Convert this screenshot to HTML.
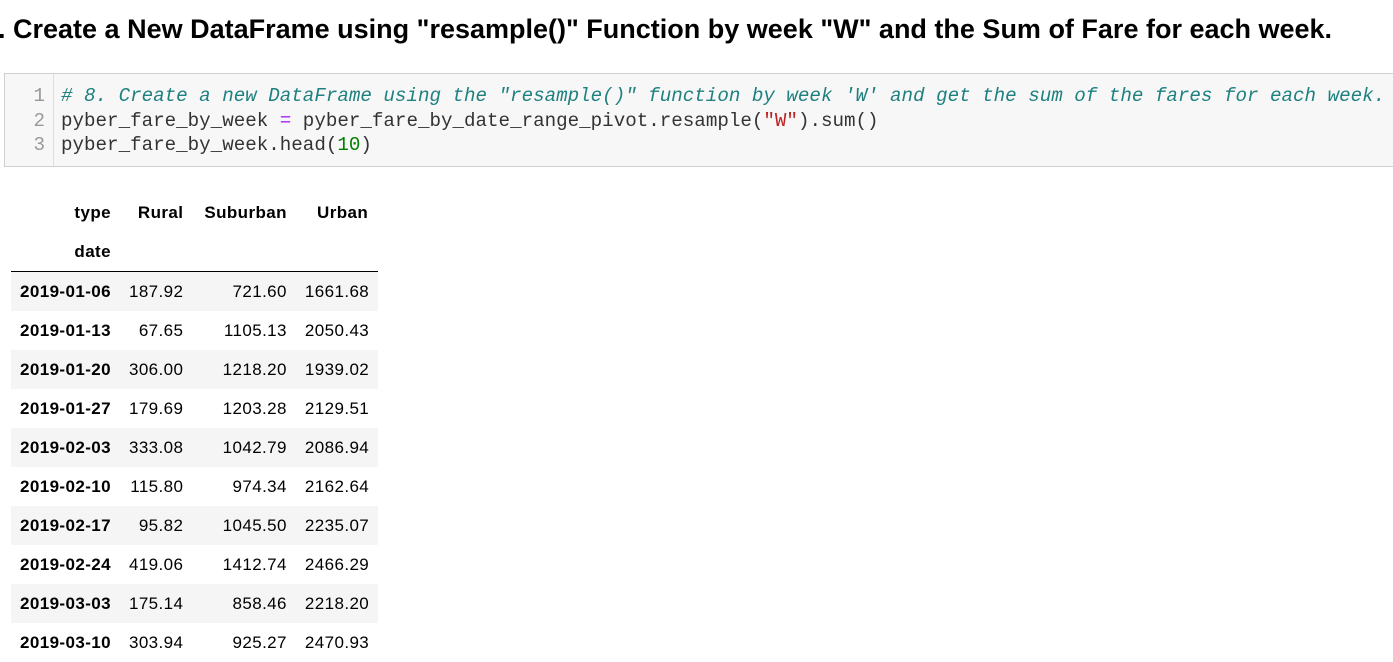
<!DOCTYPE html>
<html><head><style>
body{margin:0;background:#fff;width:1393px;height:659px;overflow:hidden;font-family:"Liberation Sans",Arial,sans-serif;}
h2{position:absolute;left:-2px;top:14px;margin:0;font-size:27px;font-weight:bold;color:#000;white-space:nowrap}
.cell{position:absolute;left:4px;top:73px;width:1400px;height:92px;background:#f7f7f7;border:1px solid #cfcfcf;}
.gut{position:absolute;left:0;top:0;width:48px;height:92px;border-right:1px solid #ddd;}
.code{position:absolute;top:10px;font-family:"Liberation Mono",monospace;font-size:19.2px;line-height:24.5px;white-space:pre;color:#333}
.ln{left:0;width:40px;text-align:right;color:#999}
.src{left:56px}
.c{color:#1f8080;font-style:italic}
.o{color:#aa22ff}.s{color:#ba2121}.n{color:#008000}
table{position:absolute;left:11px;top:193px;border-collapse:collapse;font-size:17px;letter-spacing:0.4px;color:#000}
td,th{height:39px;padding:0 9px;text-align:right;white-space:nowrap}
th{font-weight:bold}
thead tr:last-child th{border-bottom:1px solid #000}
tbody tr:nth-child(odd){background:#f5f5f5}
</style></head><body>
<h2>. Create a New DataFrame using "resample()" Function by week "W" and the Sum of Fare for each week.</h2>
<div class="cell"><div class="gut"></div>
<div class="code ln">1
2
3</div>
<div class="code src"><span class="c"># 8. Create a new DataFrame using the "resample()" function by week 'W' and get the sum of the fares for each week.</span>
pyber_fare_by_week <span class="o">=</span> pyber_fare_by_date_range_pivot.resample(<span class="s">"W"</span>).sum()
pyber_fare_by_week.head(<span class="n">10</span>)</div></div>
<table>
<thead><tr><th>type</th><th style="padding-left:16px">Rural</th><th style="padding-left:12px">Suburban</th><th style="padding-left:16px;padding-right:10px">Urban</th></tr>
<tr><th>date</th><th></th><th></th><th></th></tr></thead>
<tbody>
<tr><th>2019-01-06</th><td>187.92</td><td>721.60</td><td>1661.68</td></tr>
<tr><th>2019-01-13</th><td>67.65</td><td>1105.13</td><td>2050.43</td></tr>
<tr><th>2019-01-20</th><td>306.00</td><td>1218.20</td><td>1939.02</td></tr>
<tr><th>2019-01-27</th><td>179.69</td><td>1203.28</td><td>2129.51</td></tr>
<tr><th>2019-02-03</th><td>333.08</td><td>1042.79</td><td>2086.94</td></tr>
<tr><th>2019-02-10</th><td>115.80</td><td>974.34</td><td>2162.64</td></tr>
<tr><th>2019-02-17</th><td>95.82</td><td>1045.50</td><td>2235.07</td></tr>
<tr><th>2019-02-24</th><td>419.06</td><td>1412.74</td><td>2466.29</td></tr>
<tr><th>2019-03-03</th><td>175.14</td><td>858.46</td><td>2218.20</td></tr>
<tr><th>2019-03-10</th><td>303.94</td><td>925.27</td><td>2470.93</td></tr>
</tbody></table>
</body></html>
